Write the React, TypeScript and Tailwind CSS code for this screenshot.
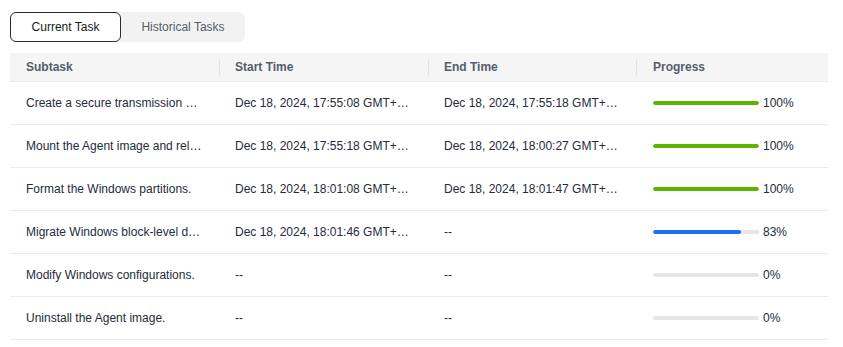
import React from "react";

type Row = { name: string; start: string; end: string; pct: number };

const rows: Row[] = [
  { name: "Create a secure transmission channel.", start: "Dec 18, 2024, 17:55:08 GMT+08:00", end: "Dec 18, 2024, 17:55:18 GMT+08:00", pct: 100 },
  { name: "Mount the Agent image and release it.", start: "Dec 18, 2024, 17:55:18 GMT+08:00", end: "Dec 18, 2024, 18:00:27 GMT+08:00", pct: 100 },
  { name: "Format the Windows partitions.", start: "Dec 18, 2024, 18:01:08 GMT+08:00", end: "Dec 18, 2024, 18:01:47 GMT+08:00", pct: 100 },
  { name: "Migrate Windows block-level data.", start: "Dec 18, 2024, 18:01:46 GMT+08:00", end: "--", pct: 83 },
  { name: "Modify Windows configurations.", start: "--", end: "--", pct: 0 },
  { name: "Uninstall the Agent image.", start: "--", end: "--", pct: 0 },
];

function Progress({ pct }: { pct: number }) {
  const color = pct === 100 ? "bg-[#5cb300]" : "bg-[#1a6ff5]";
  return (
    <div className="flex items-center">
      <div className="w-[106px] h-[4px] rounded-full bg-[#e6e6e6] overflow-hidden">
        {pct > 0 && <div className={`h-full rounded-full ${color}`} style={{ width: `${pct}%` }} />}
      </div>
      <span className="ml-[4px] text-[#252b3a]">{pct}%</span>
    </div>
  );
}

export default function App() {
  return (
    <div className="w-[843px] h-[347px] bg-white pl-[10px] pt-[12px] text-[12px] text-[#252b3a]" style={{ fontFamily: '"Liberation Sans", Arial, sans-serif' }}>
      <div className="flex w-[235px] h-[30px] rounded-[6px] bg-[#f2f2f2]">
        <div className="w-[111px] h-[30px] flex items-center justify-center rounded-[6px] border border-[#252b3a] bg-white text-[#191919]">
          Current Task
        </div>
        <div className="flex-1 flex items-center justify-center text-[#575d6c]">Historical Tasks</div>
      </div>
      <div className="mt-[11px] w-[818px]">
        <div className="grid grid-cols-[209px_209px_209px_191px] h-[29px] bg-[#f5f5f5] border-b border-[#ebebeb] font-bold text-[#575d6c]">
          <div className="flex items-center px-4">Subtask</div>
          <div className="flex items-center px-4 relative"><span className="absolute left-0 top-[6px] h-[16px] w-px bg-[#dfe1e6]" />Start Time</div>
          <div className="flex items-center px-4 relative"><span className="absolute left-0 top-[6px] h-[16px] w-px bg-[#dfe1e6]" />End Time</div>
          <div className="flex items-center px-4 relative"><span className="absolute left-[-1px] top-[6px] h-[16px] w-px bg-[#dfe1e6]" />Progress</div>
        </div>
        {rows.map((r, i) => (
          <div key={i} className="grid grid-cols-[209px_209px_209px_191px] h-[43px] border-b border-[#ebebeb]">
            <div className="flex items-center pl-4 pr-[17px] min-w-0"><span className="truncate">{r.name}</span></div>
            <div className="flex items-center pl-4 pr-[18px] min-w-0"><span className="truncate">{r.start}</span></div>
            <div className="flex items-center pl-4 pr-[18px] min-w-0"><span className="truncate">{r.end}</span></div>
            <div className="flex items-center pl-4"><Progress pct={r.pct} /></div>
          </div>
        ))}
      </div>
    </div>
  );
}
